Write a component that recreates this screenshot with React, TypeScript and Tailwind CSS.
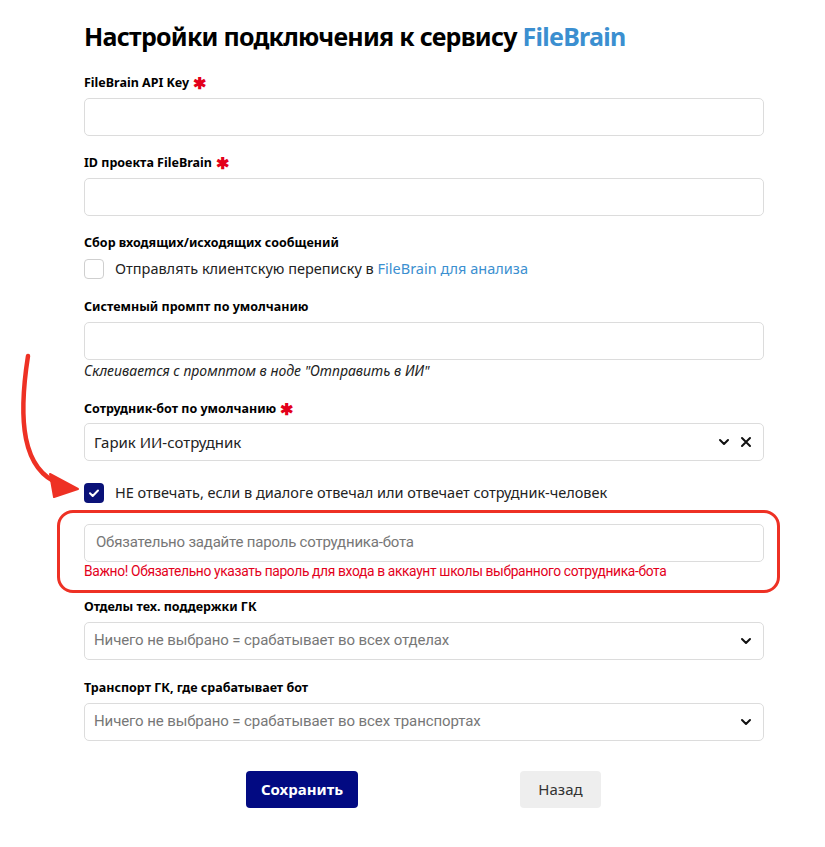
import React from 'react'

function Req() {
  return <span className="text-[#e3001b] ml-1 text-[16px] leading-none align-[-2px]">✱</span>
}

function Label({ children, req }: { children: React.ReactNode; req?: boolean }) {
  return (
    <div className="text-[12.5px] font-bold text-black leading-[18px] mb-[6px]">
      {children}
      {req && <Req />}
    </div>
  )
}

function Chevron() {
  return (
    <svg width="12" height="12" viewBox="0 0 12 12" fill="none">
      <path d="M2 4l4 4 4-4" stroke="#111" strokeWidth="2" strokeLinecap="round" strokeLinejoin="round" />
    </svg>
  )
}

function Cross() {
  return (
    <svg width="12" height="12" viewBox="0 0 12 12" fill="none">
      <path d="M2 2l8 8M10 2l-8 8" stroke="#111" strokeWidth="2" strokeLinecap="round" />
    </svg>
  )
}

function Input({ placeholder }: { placeholder?: string }) {
  return (
    <div className="h-[38px] border border-[#dcdcdc] rounded-[5px] bg-white flex items-center px-[11px]">
      {placeholder && <span className="text-[15px] text-[#777] font-['Roboto'] tracking-[-0.2px]">{placeholder}</span>}
    </div>
  )
}

function Select({ value, placeholder, clear }: { value?: string; placeholder?: string; clear?: boolean }) {
  return (
    <div className="h-[38px] border border-[#dcdcdc] rounded-[5px] bg-white flex items-center pl-[9px] pr-[11px]">
      <span className={value ? 'flex-1 text-[15px] text-[#222]' : "flex-1 text-[15px] text-[#777] font-['Roboto'] tracking-[-0.1px]"}>
        {value || placeholder}
      </span>
      <div className="flex items-center gap-[10px]">
        <Chevron />
        {clear && <Cross />}
      </div>
    </div>
  )
}

export default function App() {
  return (
    <div className="relative w-[825px] min-h-[847px] bg-white font-['Noto_Sans',sans-serif] text-[#111]">
      <svg className="absolute left-0 top-0 pointer-events-none" width="100" height="520" viewBox="0 0 100 520">
        <path d="M28 356 C 18 420, 22 470, 60 484" stroke="#ee3124" strokeWidth="4.5" fill="none" strokeLinecap="round" />
        <path d="M78 489 L50 474 L54 497 Z" fill="#ee3124" stroke="#ee3124" strokeWidth="2" strokeLinejoin="round" />
      </svg>

      <div className="w-[680px] ml-[84px] pt-[18px] pb-[40px]">
        <h1 className="text-[25px] font-bold leading-[36px] text-black tracking-[-0.75px]">
          Настройки подключения к сервису <span className="text-[#3b8fd0]">FileBrain</span>
        </h1>

        <div className="mt-[20px]">
          <Label req>FileBrain API Key</Label>
          <Input />
        </div>

        <div className="mt-[18px]">
          <Label req>ID проекта FileBrain</Label>
          <Input />
        </div>

        <div className="mt-[18px]">
          <Label>Сбор входящих/исходящих сообщений</Label>
          <div className="flex items-center gap-[11px]">
            <div className="w-[20px] h-[20px] border border-[#cfcfcf] rounded-[4px] bg-white" />
            <span className="text-[14.5px] text-[#222]">
              Отправлять клиентскую переписку в <span className="text-[#3b8fd0]">FileBrain для анализа</span>
            </span>
          </div>
        </div>

        <div className="mt-[18px]">
          <Label>Системный промпт по умолчанию</Label>
          <Input />
          <div className="text-[14px] italic text-[#222] mt-[1px] leading-[20px]">Склеивается с промптом в ноде "Отправить в ИИ"</div>
        </div>

        <div className="mt-[19px]">
          <div className="mb-[-1px]"><Label req>Сотрудник-бот по умолчанию</Label></div>
          <Select value="Гарик ИИ-сотрудник" clear />
        </div>

        <div className="flex items-center gap-[11px] mt-[21px]">
          <div className="w-[20px] h-[20px] rounded-[4px] bg-[#0a1278] flex items-center justify-center">
            <svg width="12" height="12" viewBox="0 0 12 12" fill="none">
              <path d="M2 6.3l2.7 2.7L10 3.5" stroke="white" strokeWidth="2" strokeLinecap="round" strokeLinejoin="round" />
            </svg>
          </div>
          <span className="text-[14.5px] text-[#222]">НЕ отвечать, если в диалоге отвечал или отвечает сотрудник-человек</span>
        </div>

        <div className="relative mt-[20px] pb-[6px]">
          <div className="absolute -left-[27px] -right-[16px] -top-[14px] -bottom-[7px] border-[3px] border-[#ee3124] rounded-[16px] pointer-events-none" />
          <Input placeholder="Обязательно задайте пароль сотрудника-бота" />
          <div className="text-[13.8px] text-[#e3001b] font-['Roboto'] tracking-[-0.35px] mt-0 leading-[18px]">
            Важно! Обязательно указать пароль для входа в аккаунт школы выбранного сотрудника-бота
          </div>
        </div>

        <div className="mt-[12px]">
          <div className="mb-[3px]"><Label>Отделы тех. поддержки ГК</Label></div>
          <Select placeholder="Ничего не выбрано = срабатывает во всех отделах" />
        </div>

        <div className="mt-[19px]">
          <Label>Транспорт ГК, где срабатывает бот</Label>
          <Select placeholder="Ничего не выбрано = срабатывает во всех транспортах" />
        </div>

        <div className="flex mt-[30px]">
          <button className="ml-[162px] w-[112px] h-[37px] rounded-[4px] bg-[#020a82] text-white text-[15px] font-bold">Сохранить</button>
          <button className="ml-[162px] w-[81px] h-[37px] rounded-[4px] bg-[#eeeeee] text-[#333] text-[15px]">Назад</button>
        </div>
      </div>
    </div>
  )
}
